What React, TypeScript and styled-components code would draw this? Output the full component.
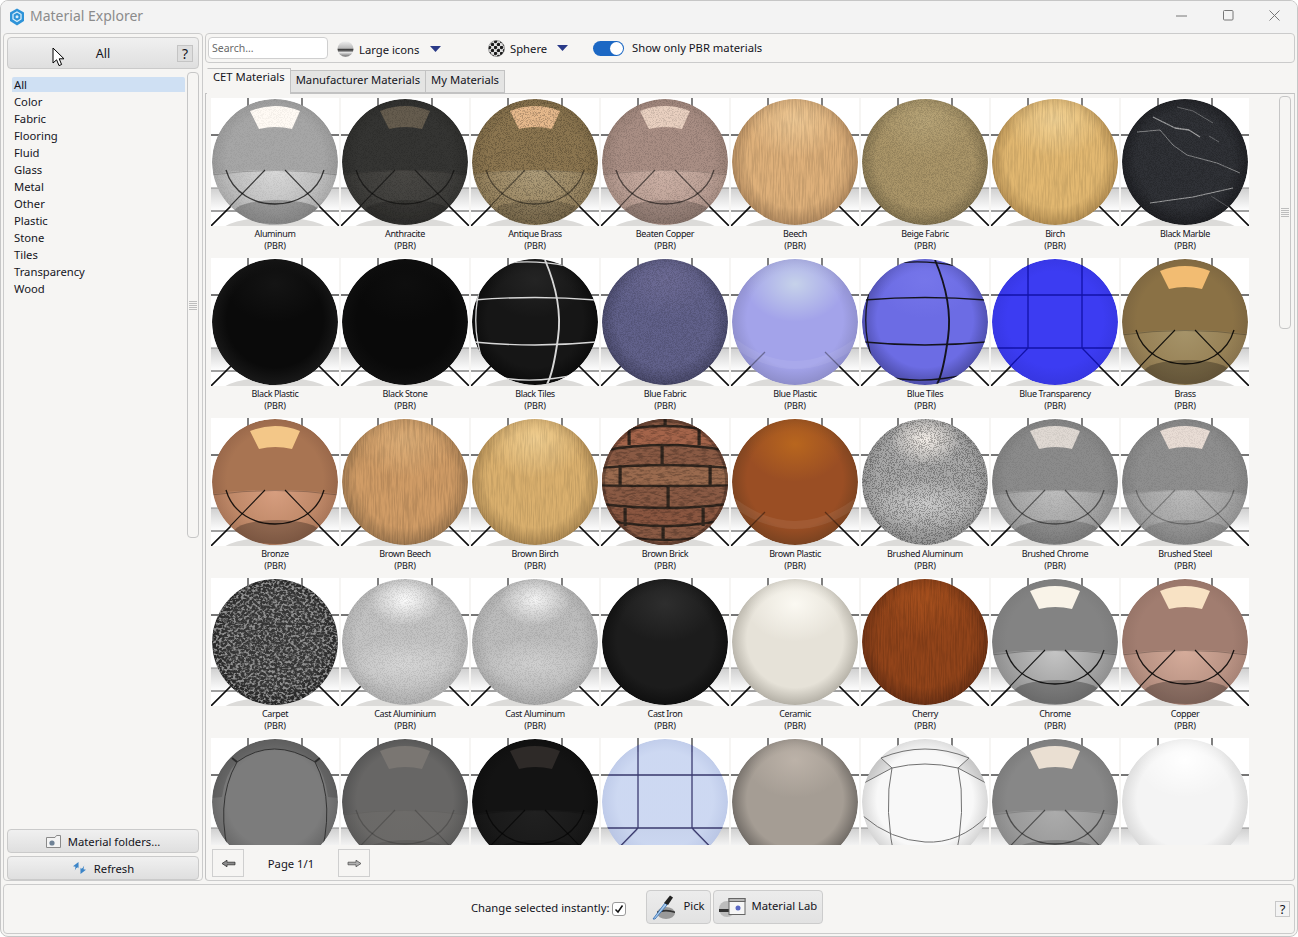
import React from "react";
import styled, { createGlobalStyle } from "styled-components";

const Global = createGlobalStyle`
  html, body { margin: 0; padding: 0; background: #ffffff; }
  body { font-family: "Noto Sans", "Open Sans", sans-serif; font-size: 11.25px; color: #14141c; }
  * { box-sizing: border-box; }
`;

const Window = styled.div`
  width: 1298px; height: 937px; display: flex; flex-direction: column;
  background: #f6f5f3; border: 1px solid #c6c6c6; border-radius: 8px; overflow: hidden;
  padding-bottom: 2px;
`;
const TitleBar = styled.div`
  height: 32px; flex: none; display: flex; align-items: center; padding-left: 8px; background: #f3f3f3;
`;
const TitleText = styled.span`
  font-size: 14px; color: #8b8b8b; margin: -3px 0 0 5px; flex: 1;
`;
const WinBtn = styled.div`
  width: 46px; height: 29px; align-self: flex-start; display: flex; align-items: center; justify-content: center;
`;
const Main = styled.div`
  flex: none; height: 848px; display: flex; gap: 2px; padding: 0 2px;
`;
const LeftPanel = styled.aside`
  position: relative; width: 200px; flex: none; display: flex; flex-direction: column;
  border: 1px solid #cbcbcb; border-radius: 4px; padding: 3px 3px 0;
`;
const Btn = styled.button<{ $h?: number }>`
  height: ${(p) => p.$h ?? 24}px; flex: none; width: 100%; display: flex; align-items: center; justify-content: center; gap: 7px;
  border: 1px solid #cacaca; border-radius: 4px; background: linear-gradient(#f0f0f0, #dfdfdf);
  font: inherit; color: inherit; padding: 0; position: relative;
`;
const AllLabel = styled.span`
  font-size: 12.5px;
`;
const HelpBox = styled.span`
  position: absolute; right: 5px; top: 7px; width: 16px; height: 17px; background: #dedede; border: 1px solid #c4c4c4;
  font-size: 14px; line-height: 15px; text-align: center;
`;
const CursorWrap = styled.span`
  position: absolute; left: 44px; top: 9px; line-height: 0;
`;
const ListArea = styled.div`
  flex: 1; display: flex; min-height: 0; margin-top: 3px; margin-bottom: 1px;
`;
const CatList = styled.ul`
  flex: 1; list-style: none; margin: 0; padding: 5px 2px 0 5px;
`;
const CatItem = styled.li<{ $on?: boolean }>`
  height: 17px; line-height: 15px; padding-left: 2px; border-radius: 2px;
  background: ${(p) => (p.$on ? "linear-gradient(#cfe0f3, #cfe0f3) 0 0 / 100% 15px no-repeat" : "transparent")};
`;
const ScrollTrack = styled.div`
  width: 12px; flex: none; display: flex; flex-direction: column;
`;
const ScrollThumb = styled.div<{ $h: number }>`
  height: ${(p) => p.$h}px; border: 1px solid #c6c6c6; border-radius: 4px; display: flex; align-items: center; justify-content: center; background: #f6f5f3;
`;
const Grip = styled.span`
  width: 8px; height: 9px; background: repeating-linear-gradient(#bdbdbd 0 1px, transparent 1px 2px);
`;
const SideButtons = styled.div`
  display: flex; flex-direction: column; gap: 3px; padding-top: 5px;
`;
const Right = styled.section`
  flex: 1; min-width: 0; display: flex; flex-direction: column;
`;
const Toolbar = styled.div`
  height: 30px; flex: none; display: flex; align-items: center; border: 1px solid #cbcbcb; border-radius: 4px; padding-left: 2px;
`;
const Search = styled.input`
  width: 120px; height: 22px; border: 1px solid #cfcfcf; border-radius: 4px; background: #fff; font: inherit; font-size: 10.5px; padding: 0 3px; outline: none;
  &::placeholder { color: #6a6a6a; opacity: 1; }
`;
const ToolItem = styled.div<{ $l: number; $y?: number }>`
  display: flex; align-items: center; margin-left: ${(p) => p.$l}px; transform: translateY(${(p) => p.$y ?? 0}px);
`;
const ToolText = styled.span<{ $w: number }>`
  width: ${(p) => p.$w}px; margin-left: 5px;
`;
const Toggle = styled.span`
  width: 31px; height: 15px; border-radius: 8px; background: #1c68c4; position: relative; display: block;
`;
const Knob = styled.span`
  position: absolute; right: 1px; top: 1px; width: 13px; height: 13px; border-radius: 50%; background: #fff;
`;
const ToggleText = styled.span`
  margin-left: 8px; margin-top: -1px;
`;
const Tabs = styled.div`
  height: 25px; margin-top: 5px; flex: none; display: flex; align-items: flex-end; padding-left: 2px; position: relative; z-index: 1;
`;
const Tab = styled.div<{ $on?: boolean }>`
  height: ${(p) => (p.$on ? 26 : 23)}px; margin-bottom: ${(p) => (p.$on ? -1 : 0)}px; padding: 0 5px; line-height: ${(p) => (p.$on ? 16 : 18)}px;
  background: ${(p) => (p.$on ? "#f6f5f3" : "#e4e4e3")};
  border: 1px solid #c2c2c2; border-bottom: ${(p) => (p.$on ? "none" : "1px solid #c2c2c2")};
  border-left: ${(p) => (p.$on ? "1px solid transparent" : "none")};
  flex: none;
`;
const Content = styled.div`
  flex: 1; min-height: 0; border: 1px solid; border-radius: 0 0 4px 4px; display: flex; flex-direction: column; border-color: #c2c2c2 #cbcbcb #cbcbcb #c2c2c2;
`;
const GridRow = styled.div`
  height: 751px; flex: none; display: flex; padding-top: 4px;
`;
const GridClip = styled.div`
  flex: 1; overflow: hidden; padding-left: 5px;
`;
const Grid = styled.div`
  display: grid; grid-template-columns: repeat(8, 128px); column-gap: 2px; grid-auto-rows: 160px;
`;
const Tile = styled.div`
  display: flex; flex-direction: column; align-items: center;
`;
const TileName = styled.span`
  font-size: 9px; letter-spacing: -0.38px; line-height: 12px; margin-top: 2px; white-space: nowrap; text-align: center; color: #14141c;
`;
const TileTag = styled.span`
  font-size: 9px; letter-spacing: -0.2px; line-height: 12px; white-space: nowrap;
`;
const GridScroll = styled.div`
  width: 12px; flex: none; margin: -2px 3px 0 0; display: flex; flex-direction: column;
`;
const Pager = styled.div`
  flex: 1; display: flex; align-items: flex-start; padding: 4px 0 0 6px;
`;
const PageBtn = styled.div`
  width: 32px; height: 28px; border: 1px solid #cfcfcf; display: flex; align-items: center; justify-content: center;
`;
const PageText = styled.span`
  width: 94px; text-align: center; line-height: 30px;
`;
const BottomBar = styled.div`
  margin: 3px 2px 0; height: 50px; flex: none; border: 1px solid #cbcbcb; border-radius: 4px; display: flex; align-items: center; padding-left: 467px;
`;
const BarLabel = styled.span`
  margin-top: -3px;
`;
const CheckBox = styled.span`
  width: 14px; height: 14px; border: 1px solid #9a9a9a; border-radius: 3px; margin-left: 3px; display: flex; align-items: center; justify-content: center; background: #fff;
`;
const ActionBtn = styled.div<{ $w: number; $l: number }>`
  width: ${(p) => p.$w}px; height: 34px; margin: 0 0 4px ${(p) => p.$l}px; border: 1px solid #cccccc; border-radius: 4px; background: linear-gradient(#ececec, #e2e2e2);
  display: flex; align-items: center; padding-left: 5px; gap: 5px;
`;
const ActionText = styled.span`
  margin-top: -3px;
`;
const BottomHelp = styled.span`
  margin-left: auto; margin-right: 4px; width: 15px; height: 16px; border: 1px solid #c8c8c8; font-size: 13px; line-height: 14px; text-align: center; background: #f3f3f3;
`;

type GrainKey = "wood" | "fabric" | "speck" | "fine" | "mottle";
type Spec = {
  n?: string; k: "mirror" | "wood" | "gloss" | "matte" | "tiles" | "tilesB" | "tilesC" | "glass" | "brick" | "marble" | "noise" | "carpet";
  c: string; e: string; hi?: string; win?: string; low?: string; lo?: number; line?: string; grain?: GrainKey; go?: number; lw?: number; diag?: number;
};

const S: Spec[] = [
  { n: "Aluminum", k: "mirror", c: "#a6a6a6", e: "#959595", win: "#fffaf4", low: "#e2e2e2", lo: .85, grain: "speck", go: .04, lw: .7 },
  { n: "Anthracite", k: "mirror", c: "#353533", e: "#2c2c2a", win: "#655c4e", low: "#504e4a", lo: .8, grain: "fine", go: .12, lw: .5 },
  { n: "Antique Brass", k: "mirror", c: "#8c7650", e: "#796644", win: "#e6b98c", low: "#b8a886", lo: .8, grain: "fine", go: .22, lw: .45 },
  { n: "Beaten Copper", k: "mirror", c: "#a98e84", e: "#947c72", win: "#e9d0c0", low: "#d8bcb0", lo: .8, grain: "fine", go: .12, lw: .55 },
  { n: "Beech", k: "wood", c: "#deb07a", e: "#ad865c", hi: "#eec894", grain: "wood", go: .1 },
  { n: "Beige Fabric", k: "wood", c: "#ab9669", e: "#80714e", hi: "#b8a578", grain: "fabric", go: .13 },
  { n: "Birch", k: "wood", c: "#e2b871", e: "#b08b50", hi: "#f2d294", grain: "wood", go: .09 },
  { n: "Black Marble", k: "marble", c: "#303237", e: "#1e1f23", hi: "#3a3b40", grain: "fabric", go: .18 },
  { n: "Black Plastic", k: "gloss", c: "#0a0a0a", e: "#1a1a1a", hi: "#141414" },
  { n: "Black Stone", k: "gloss", c: "#090909", e: "#101010", hi: "#0e0e0e" },
  { n: "Black Tiles", k: "tiles", c: "#161616", e: "#0a0a0a", hi: "#242424", line: "#d8d8d8" },
  { n: "Blue Fabric", k: "matte", c: "#62628c", e: "#474768", hi: "#6e6c96", grain: "fabric", go: .14 },
  { n: "Blue Plastic", k: "gloss", c: "#a3a3ea", e: "#8c8cc8", hi: "#c6d2ea", diag: .35 },
  { n: "Blue Tiles", k: "tiles", c: "#6c6ce4", e: "#4a4aa4", hi: "#7676ea", line: "#14141e" },
  { n: "Blue Transparency", k: "glass", c: "#3c3cf2", e: "#3636e0", line: "#1212a8" },
  { n: "Brass", k: "mirror", c: "#8a7145", e: "#7a6440", win: "#f2bc72", low: "#ab9a70", lo: .85 },
  { n: "Bronze", k: "mirror", c: "#a87452", e: "#946448", win: "#f3c788", low: "#e0a688", lo: .85 },
  { n: "Brown Beech", k: "wood", c: "#d09c66", e: "#9c764e", hi: "#dcae78", grain: "wood", go: .11 },
  { n: "Brown Birch", k: "wood", c: "#dab06e", e: "#a88550", hi: "#f0ce90", grain: "wood", go: .09 },
  { n: "Brown Brick", k: "brick", c: "#8f5c44", e: "#4a2e24", grain: "mottle", go: .22 },
  { n: "Brown Plastic", k: "gloss", c: "#9a4e24", e: "#784220", hi: "#b8661e", diag: .4 },
  { n: "Brushed Aluminum", k: "noise", c: "#a8a8a8", e: "#8e8e8e", hi: "#f6f0ea", low: "#d2d2d2", grain: "speck", go: .27 },
  { n: "Brushed Chrome", k: "mirror", c: "#8b8b8b", e: "#7c7c7c", win: "#dfd8d2", low: "#cccccc", lo: .8, grain: "speck", go: .05, lw: .5 },
  { n: "Brushed Steel", k: "mirror", c: "#8e8e8e", e: "#7e7e7e", win: "#e8dcd4", low: "#c8c8c8", lo: .8, grain: "speck", go: .05, lw: .3 },
  { n: "Carpet", k: "carpet", c: "#363636", e: "#222222" },
  { n: "Cast Aluminium", k: "noise", c: "#c2c2c2", e: "#adadad", hi: "#fbfbfb", low: "#dadada", grain: "speck", go: .07 },
  { n: "Cast Aluminum", k: "noise", c: "#bcbcbc", e: "#a6a6a6", hi: "#f4f4f4", low: "#d4d4d4", grain: "speck", go: .07 },
  { n: "Cast Iron", k: "gloss", c: "#1c1c1c", e: "#0e0e0e", hi: "#2e2e2e" },
  { n: "Ceramic", k: "gloss", c: "#e6e2d8", e: "#b0aca2", hi: "#fbf9f2" },
  { n: "Cherry", k: "wood", c: "#92441a", e: "#6a3014", hi: "#a6501e", grain: "wood", go: .12 },
  { n: "Chrome", k: "mirror", c: "#838383", e: "#7a7a7a", win: "#f9f3e8", low: "#cdcdcd", lo: .9 },
  { n: "Copper", k: "mirror", c: "#a17d70", e: "#947266", win: "#f8e2c4", low: "#dcb2a0", lo: .9 },
  { k: "tilesC", c: "#7c7c7c", e: "#666666", hi: "#808080", line: "#2c2c2c" },
  { k: "mirror", c: "#676665", e: "#505050", win: "#7a7672", low: "#716f6c", lo: .6, lw: .2 },
  { k: "mirror", c: "#131313", e: "#0e0e0e", win: "#2e2a28", low: "#242424", lo: .8, lw: .6 },
  { k: "glass", c: "#c6d3f0", e: "#b2c0e4", line: "#3c3c70" },
  { k: "matte", c: "#a59d94", e: "#6a6560", hi: "#bcb2a8" },
  { k: "tilesB", c: "#f8f8f8", e: "#d0d0d0", hi: "#ffffff", line: "#707070" },
  { k: "mirror", c: "#878787", e: "#787878", win: "#eadfd2", low: "#bcbcbc", lo: .7, lw: .5 },
  { k: "matte", c: "#f4f4f4", e: "#d6d6d6", hi: "#ffffff" },
];

const grainCfg: Record<GrainKey, { f: string; o: number; m: string }> = {
  wood: { f: "0.85 0.04", o: 3, m: "3 0 0 0 -1.1" },
  fabric: { f: "1.37 1.37", o: 1, m: "4 0 0 0 -1.6" },
  speck: { f: "1.37 1.37", o: 1, m: "9 0 0 0 -4.4" },
  fine: { f: "1.37 1.37", o: 1, m: "5 0 0 0 -2.3" },
  mottle: { f: "0.14 0.5", o: 3, m: "4 0 0 0 -1.7" },
};

const CLine = ({ y }: { y: number }) => {
  const d = (y - 64) * 0.16;
  return <path d={`M0,${y - d} Q64,${y + d} 128,${y - d}`} />;
};

const Sphere = ({ s, i }: { s: Spec; i: number }) => {
  const id = `m${i}`;
  const clip = `url(#${id}c)`;
  const bricks: [number, number, number][] = [[64, 1, 7], [28, 8, 19], [98, 8, 19], [61, 27, 20], [19, 47, 21], [109, 47, 21], [67, 68, 22], [24, 90, 18], [102, 90, 18], [62, 108, 14]];
  const lw = s.lw ?? .85;
  return (
    <svg width="128" height="128" viewBox="0 0 128 128">
      <defs>
        <clipPath id={`${id}c`}><circle cx="64" cy="64" r="63" /></clipPath>
        <radialGradient id={`${id}b`} cx=".5" cy=".48" r=".53">
          <stop offset="0" stopColor={s.c} />
          <stop offset=".72" stopColor={s.c} />
          <stop offset="1" stopColor={s.e} />
        </radialGradient>
        <radialGradient id={`${id}h`} cx=".5" cy=".5" r=".5">
          <stop offset="0" stopColor={s.hi ?? s.c} stopOpacity="1" />
          <stop offset="1" stopColor={s.hi ?? s.c} stopOpacity="0" />
        </radialGradient>
        <radialGradient id={`${id}n`} cx=".5" cy=".5" r=".5">
          <stop offset="0" stopColor={s.low ?? s.c} stopOpacity=".85" />
          <stop offset="1" stopColor={s.low ?? s.c} stopOpacity="0" />
        </radialGradient>
        <radialGradient id={`${id}l`} gradientUnits="userSpaceOnUse" cx="64" cy="72" r="64">
          <stop offset="0" stopColor={s.low ?? s.c} stopOpacity={s.lo ?? .8} />
          <stop offset="1" stopColor={s.low ?? s.c} stopOpacity=".2" />
        </radialGradient>
        <linearGradient id={`${id}f`} x1="0" y1="0" x2="0" y2="1">
          <stop offset="0" stopColor="#cfcfcf" />
          <stop offset="1" stopColor="#ffffff" />
        </linearGradient>
        {s.grain && (
          <filter id={`${id}g`} x="0" y="0" width="100%" height="100%" colorInterpolationFilters="sRGB">
            <feTurbulence type="fractalNoise" baseFrequency={grainCfg[s.grain].f} numOctaves={grainCfg[s.grain].o} seed={i + 3} />
            <feColorMatrix values={`0 0 0 0 0  0 0 0 0 0  0 0 0 0 0  ${grainCfg[s.grain].m}`} />
          </filter>
        )}
        {s.k === "carpet" && (
          <filter id={`${id}g`} x="0" y="0" width="100%" height="100%" colorInterpolationFilters="sRGB">
            <feTurbulence type="fractalNoise" baseFrequency="0.36 0.42" numOctaves={2} seed={7} />
            <feColorMatrix values="0 0 0 0 .56  0 0 0 0 .56  0 0 0 0 .56  4.5 0 0 0 -2" />
          </filter>
        )}
      </defs>

      <rect width="128" height="128" fill="#fff" />
      <rect y="90" width="128" height="23" fill={`url(#${id}f)`} />
      <ellipse cx="64" cy="134" rx="54" ry="15" fill="#dcdbd9" />
      <g stroke="#4a4a4a" strokeWidth="1.4" fill="none">
        <path d="M37,0V14M91,0V14M0,37H128" />
        <path d="M0,90H128" stroke="#8a8a8a" strokeWidth="1" />
        <path d="M0,113H128" stroke="#444" strokeWidth="1" />
      </g>
      <path d="M0,128L36,92M128,128L92,92" stroke="#0c0c0c" strokeWidth="1.6" />

      <g clipPath={clip}>
        <circle cx="64" cy="64" r="63" fill={`url(#${id}b)`} opacity={s.k === "glass" && i > 30 ? .88 : 1} />

        {s.k === "mirror" && (
          <>
            <path d="M0,76Q64,68 128,76V128H0Z" fill={`url(#${id}l)`} />
            <path d="M39,13Q64,3 89,13L81,31Q64,27 48,31Z" fill={s.win} />
            <ellipse cx="66" cy="114" rx="43" ry="12" fill="#000" opacity={.28 * (lw + .15)} />
            <g fill="none" stroke="#000" strokeOpacity={lw}>
              <path d="M0,77Q64,68 128,77" strokeOpacity={lw * .3} />
              <path d="M15,72C22,96 44,106 64,106C84,106 106,96 113,72" strokeWidth="1.3" />
              <path d="M0,128L54,72M128,128L74,72" strokeWidth="1.1" />
            </g>
          </>
        )}
        {(s.k === "gloss" || s.k === "noise" || s.k === "wood" || s.k === "matte" || s.k === "tiles") && (
          <ellipse cx="64" cy={s.k === "gloss" ? 26 : 22} rx={s.k === "noise" ? 36 : 50} ry={s.k === "noise" ? 26 : 38} fill={`url(#${id}h)`} />
        )}
        {s.k === "noise" && <ellipse cx="64" cy="86" rx="62" ry="26" fill={`url(#${id}n)`} />}
        {s.diag && (
          <>
            <path d="M2,84Q64,130 126,84" fill="none" stroke="#fff" strokeOpacity=".07" strokeWidth="8" />
            <path d="M0,128L34,94M128,128L94,94" stroke="#000" strokeOpacity={s.diag} strokeWidth="1.3" />
          </>
        )}
        {s.k === "tiles" && (
          <g fill="none" stroke={s.line} strokeWidth="1.3">
            <path d="M3,42Q64,37 125,42M3,84Q64,90 125,84M30,6Q60,1 96,8M22,118Q60,127 108,116" />
            <path d="M74,2Q92,44 87,80T76,126" strokeWidth="1.9" />
            <path d="M11,22Q-2,64 12,104" />
          </g>
        )}
        {s.k === "tilesB" && (
          <>
            <path d="M3,45L31,30L20,20Q8,30 3,45ZM125,45L97,30L108,20Q120,30 125,45Z" fill="#000" opacity=".1" />
            <g fill="none" stroke={s.line} strokeWidth="1">
              <path d="M20,20Q64,2 108,20M31,30Q64,22 97,30M20,20L31,30M108,20L97,30M3,45L31,30M125,45L97,30" />
              <path d="M31,30Q22,70 35,128M97,30Q106,70 93,128M2,78Q30,102 64,104T126,78" />
            </g>
          </>
        )}
        {s.k === "tilesC" && (
          <>
            <path d="M0,0H128V60L117,59Q114,36 104,24Q62,-2 26,24Q14,36 11,59L0,60Z" fill="#000" opacity=".14" />
            <g fill="none" stroke={s.line} strokeWidth=".9">
              <path d="M26,24Q62,-2 104,24M26,24Q2,66 21,128M104,24Q126,66 107,128" />
              <path d="M21,20L26,24M109,20L104,24" strokeWidth="2" />
            </g>
          </>
        )}
        {s.k === "glass" && (
          <g fill="none" stroke={s.line} strokeWidth="1.3">
            <path d="M37,0V90M91,0V90M0,37H128M0,90H128M0,128L37,90M128,128L91,90" />
          </g>
        )}
        {s.k === "marble" && (
          <g fill="none" stroke="#c8c8c8" strokeWidth=".8" strokeLinejoin="round" strokeOpacity=".75">
            <path d="M16,34L39,32L52,47L66,57L96,65L119,75" />
            <path d="M32,19L54,30L68,32L79,39" strokeWidth="1.3" />
            <path d="M56,9L72,13L92,25M88,38L98,44" strokeOpacity=".5" />
            <path d="M29,105L72,99L112,90" strokeWidth="1.1" />
            <path d="M90,98L112,112" strokeOpacity=".4" />
          </g>
        )}
        {s.k === "brick" && (
          <>
            <rect width="128" height="128" fill="#8a5a44" />
            <rect y="47" width="128" height="21" fill="#9a6a4e" />
            <rect y="8" width="128" height="19" fill="#a4644a" />
            <rect y="90" width="128" height="18" fill="#8a5640" />
            <g fill="none" stroke="#33271f" strokeWidth="2.4">
              {[8, 27, 47, 68, 90, 108, 122].map((y) => <CLine key={y} y={y} />)}
            </g>
            {bricks.map(([x, y, h]) => (
              <rect key={`${x}-${y}`} x={x - 1.5} y={y} width="3.2" height={h} fill="#33271f" />
            ))}
          </>
        )}
        {s.k === "carpet" && <rect width="128" height="128" filter={`url(#${id}g)`} />}
        {s.grain && <rect width="128" height="128" filter={`url(#${id}g)`} opacity={s.go ?? .3} />}
        {s.k === "brick" && <circle cx="64" cy="64" r="63" fill="none" stroke="#1c120e" strokeOpacity=".3" strokeWidth="6" />}
      </g>
    </svg>
  );
};

const TitleLogo = () => (
  <svg width="16" height="18" viewBox="0 0 16 18">
    <path d="M8,0.5L15,4.5V13L8,17.5L1,13V4.5Z" fill="#2e93d8" />
    <path d="M8,4L12,6.3V11L8,13.5L4,11V6.3Z" fill="none" stroke="#d8eefa" strokeWidth="1.3" />
    <circle cx="8" cy="8.8" r="1.5" fill="#d8eefa" />
  </svg>
);
const Cursor = () => (
  <svg width="14" height="20" viewBox="0 0 14 20">
    <path d="M1,1V16L4.6,12.8L7,18.6L9.6,17.5L7.2,11.8H12Z" fill="#fff" stroke="#000" strokeWidth="1" />
  </svg>
);
const MiniSphere = () => (
  <svg width="17" height="18" viewBox="0 0 17 18">
    <defs>
      <linearGradient id="ms" x1="0" y1="0" x2="0" y2="1">
        <stop offset="0" stopColor="#f0f0f0" /><stop offset=".46" stopColor="#b8b8b8" />
        <stop offset=".5" stopColor="#333" /><stop offset=".62" stopColor="#666" />
        <stop offset=".72" stopColor="#e4e4e4" /><stop offset="1" stopColor="#6a6a6a" />
      </linearGradient>
    </defs>
    <ellipse cx="8.5" cy="9" rx="8" ry="7.8" fill="url(#ms)" />
  </svg>
);
const CheckerSphere = () => (
  <svg width="17" height="17" viewBox="0 0 17 17">
    <defs>
      <pattern id="cp" width="6" height="6" patternUnits="userSpaceOnUse">
        <rect width="6" height="6" fill="#e0e0e0" />
        <circle cx="1.5" cy="1.5" r="1.7" fill="#1a1a1a" /><circle cx="4.5" cy="4.5" r="1.7" fill="#1a1a1a" />
      </pattern>
    </defs>
    <circle cx="8.5" cy="8.5" r="8" fill="url(#cp)" stroke="#666" strokeWidth=".6" />
  </svg>
);
const Caret = () => (
  <svg width="11" height="6" viewBox="0 0 11 6"><path d="M0,0H11L5.5,6Z" fill="#2a3a88" /></svg>
);
const FolderIcon = () => (
  <svg width="15" height="13" viewBox="0 0 15 13">
    <path d="M.5,2.5H9L10.5,.5H14.5V12.5H.5Z" fill="#f4f4f4" stroke="#8a8a8a" />
    <circle cx="6" cy="8" r="2.6" fill="#6f8296" />
  </svg>
);
const RefreshIcon = () => (
  <svg width="15" height="14" viewBox="0 0 15 14">
    <path d="M6.5,1L1,5.2L3.5,5.8L2.8,9.5Q3.8,6.8 6,6.2L6.6,7.6Z" fill="#3c85c8" />
    <path d="M8.5,13L14,8.8L11.5,8.2L12.2,4.5Q11.2,7.2 9,7.8L8.4,6.4Z" fill="#3c85c8" />
  </svg>
);
const ArrowL = () => (
  <svg width="15" height="9" viewBox="0 0 15 9">
    <path d="M1,4.5L6,1.2V3.2H14V5.8H6V7.8Z" fill="#8a8a8a" stroke="#222" strokeWidth=".7" />
  </svg>
);
const ArrowR = () => (
  <svg width="15" height="9" viewBox="0 0 15 9">
    <path d="M14,4.5L9,1.2V3.2H1V5.8H9V7.8Z" fill="#b0b0b0" stroke="#444" strokeWidth=".7" />
  </svg>
);
const PickIcon = () => (
  <svg width="26" height="26" viewBox="0 0 26 26">
    <ellipse cx="14" cy="19" rx="9" ry="6" fill="#9a9a9a" />
    <path d="M5,17.5Q14,14 23,17.5V19Q14,16 5,19Z" fill="#333" />
    <path d="M1,25L13,9L15,11L3,25Z" fill="#a8cbed" stroke="#2d68b0" strokeWidth=".8" />
    <path d="M12,9L18,1.5L21,3.5L16,11Z" fill="#222" />
  </svg>
);
const LabIcon = () => (
  <svg width="27" height="22" viewBox="0 0 27 22">
    <ellipse cx="8" cy="13" rx="8" ry="8" fill="#bcbcbc" />
    <rect x="0" y="13" width="15" height="3" fill="#333" />
    <rect x="10" y="2.5" width="16" height="16" fill="#f6f6f6" stroke="#666" />
    <rect x="10" y="2.5" width="16" height="3" fill="#b8b8b8" stroke="#666" />
    <circle cx="19" cy="12" r="2.5" fill="#5a68c4" />
  </svg>
);

const cats = ["All", "Color", "Fabric", "Flooring", "Fluid", "Glass", "Metal", "Other", "Plastic", "Stone", "Tiles", "Transparency", "Wood"];

export default function App() {
  return (
    <Window>
      <Global />
      <TitleBar>
        <TitleLogo />
        <TitleText>Material Explorer</TitleText>
        <WinBtn><svg width="12" height="2"><path d="M0,1H11" stroke="#777" /></svg></WinBtn>
        <WinBtn><svg width="11" height="11"><rect x=".5" y=".5" width="9.5" height="9.5" rx="1" fill="none" stroke="#777" /></svg></WinBtn>
        <WinBtn><svg width="11" height="11"><path d="M.5,.5L10.5,10.5M10.5,.5L.5,10.5" stroke="#777" /></svg></WinBtn>
      </TitleBar>
      <Main>
        <LeftPanel>
          <Btn $h={32}>
            <CursorWrap><Cursor /></CursorWrap>
            <AllLabel>All</AllLabel>
            <HelpBox>?</HelpBox>
          </Btn>
          <ListArea>
            <CatList>
              {cats.map((c, i) => <CatItem key={c} $on={i === 0}>{c}</CatItem>)}
            </CatList>
            <ScrollTrack>
              <ScrollThumb $h={466}><Grip /></ScrollThumb>
            </ScrollTrack>
          </ListArea>
          <SideButtons>
            <Btn><FolderIcon />Material folders...</Btn>
            <Btn><RefreshIcon />Refresh</Btn>
          </SideButtons>
        </LeftPanel>
        <Right>
          <Toolbar>
            <Search placeholder="Search..." />
            <ToolItem $l={9} $y={1}><MiniSphere /><ToolText $w={71}>Large icons</ToolText><Caret /></ToolItem>
            <ToolItem $l={47}><CheckerSphere /><ToolText $w={47}>Sphere</ToolText><Caret /></ToolItem>
            <ToolItem $l={25}><Toggle><Knob /></Toggle><ToggleText>Show only PBR materials</ToggleText></ToolItem>
          </Toolbar>
          <Tabs>
            <Tab $on>CET Materials</Tab>
            <Tab>Manufacturer Materials</Tab>
            <Tab>My Materials</Tab>
          </Tabs>
          <Content>
            <GridRow>
              <GridClip>
                <Grid>
                  {S.map((s, i) => (
                    <Tile key={i}>
                      <Sphere s={s} i={i} />
                      {s.n && <TileName>{s.n}</TileName>}
                      {s.n && <TileTag>(PBR)</TileTag>}
                    </Tile>
                  ))}
                </Grid>
              </GridClip>
              <GridScroll>
                <ScrollThumb $h={233}><Grip /></ScrollThumb>
              </GridScroll>
            </GridRow>
            <Pager>
              <PageBtn><ArrowL /></PageBtn>
              <PageText>Page 1/1</PageText>
              <PageBtn><ArrowR /></PageBtn>
            </Pager>
          </Content>
        </Right>
      </Main>
      <BottomBar>
        <BarLabel>Change selected instantly:</BarLabel>
        <CheckBox>
          <svg width="10" height="10"><path d="M1.5,5.5L4,8L8.5,1.5" fill="none" stroke="#111" strokeWidth="1.5" /></svg>
        </CheckBox>
        <ActionBtn $w={65} $l={20}><PickIcon /><ActionText>Pick</ActionText></ActionBtn>
        <ActionBtn $w={110} $l={2}><LabIcon /><ActionText>Material Lab</ActionText></ActionBtn>
        <BottomHelp>?</BottomHelp>
      </BottomBar>
    </Window>
  );
}
